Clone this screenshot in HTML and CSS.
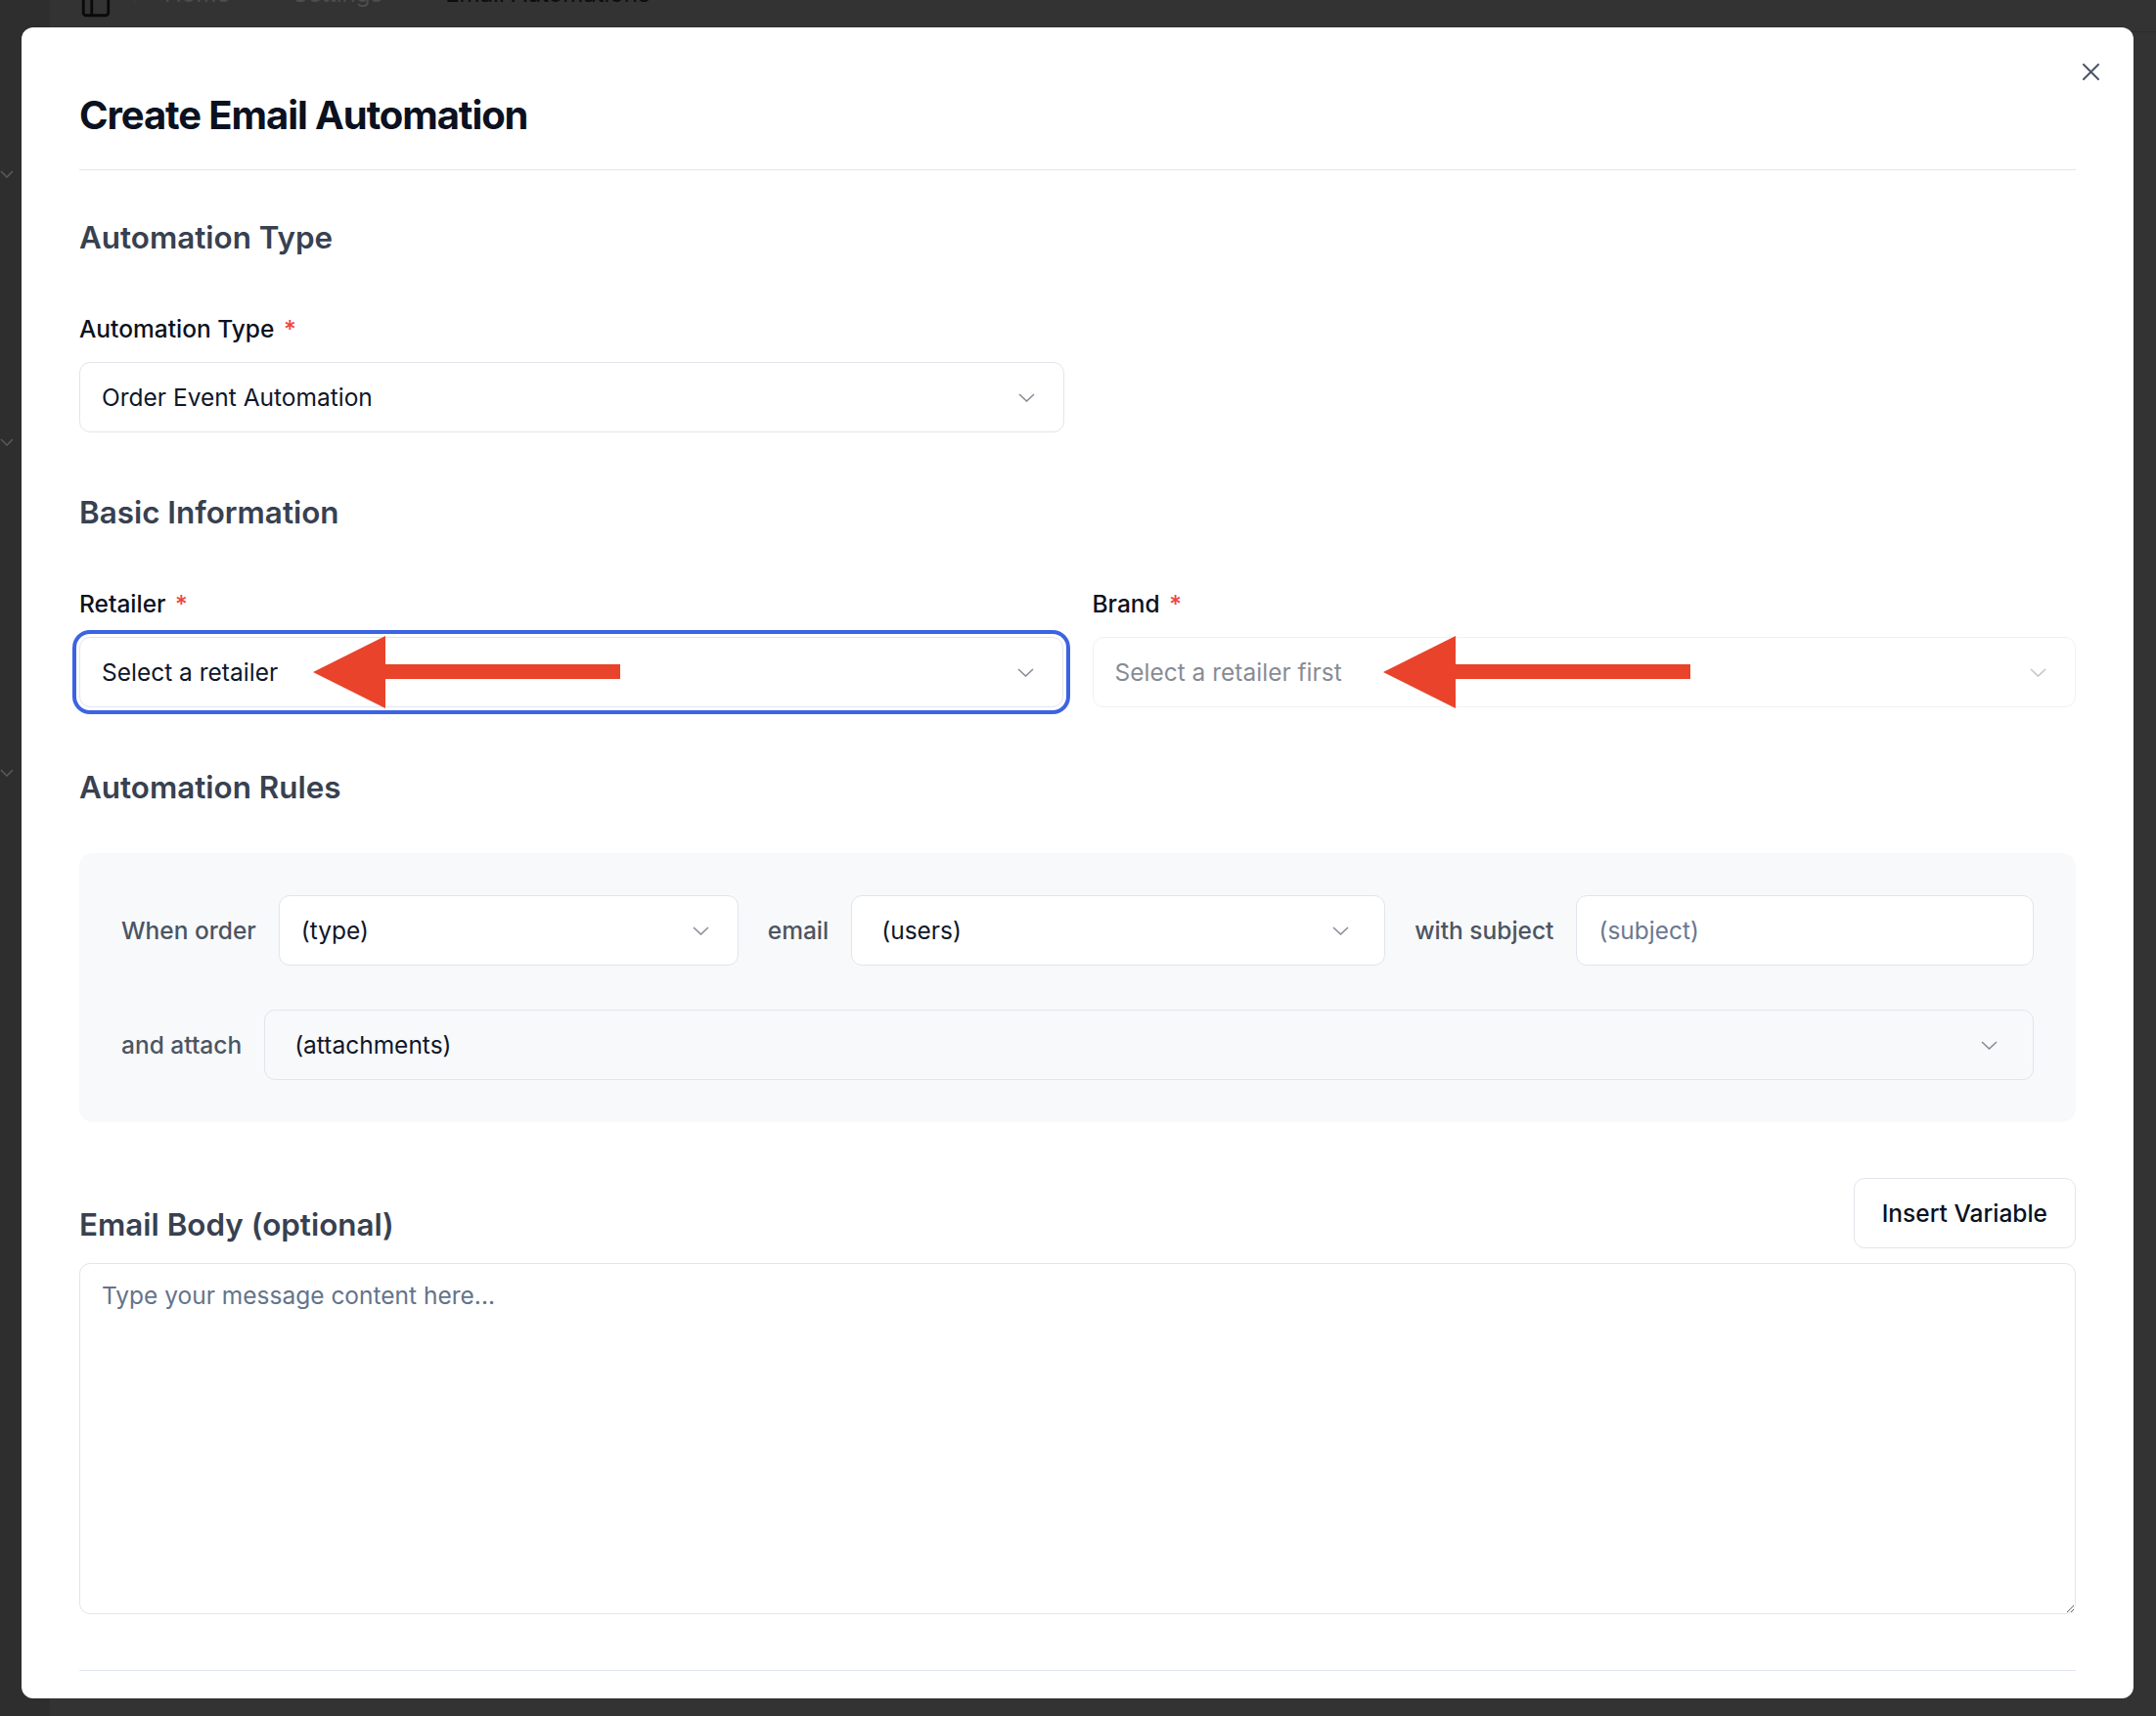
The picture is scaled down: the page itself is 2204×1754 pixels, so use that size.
FILE: index.html
```html
<!DOCTYPE html>
<html lang="en">
<head>
<meta charset="UTF-8">
<meta name="viewport" content="width=device-width, initial-scale=1.0">
<title>Create Email Automation</title>
<link rel="stylesheet" href="styles.css">
</head>
<body>

<!-- Page behind the dialog (dimmed) -->
<div class="app">
  <aside class="sidebar">
    <svg class="side-chev first" width="14" height="8" viewBox="0 0 14 8"><polyline points="1,1 7,7 13,1"/></svg>
    <svg class="side-chev second" width="14" height="8" viewBox="0 0 14 8"><polyline points="1,1 7,7 13,1"/></svg>
    <svg class="side-chev third" width="14" height="8" viewBox="0 0 14 8"><polyline points="1,1 7,7 13,1"/></svg>
  </aside>
  <div class="main">
    <header class="topbar">
      <svg class="panel-icon" width="34" height="34" viewBox="0 0 24 24"><rect x="3" y="3" width="18" height="18" rx="2"/><path d="M9 3v18"/></svg>
      <span class="topbar-sep"></span>
      <span class="crumb">Home</span>
      <span class="crumb">Settings</span>
      <span class="crumb current">Email Automations</span>
    </header>
  </div>
</div>

<!-- Dialog -->
<div class="modal">
  <button class="modal-close" type="button" aria-label="Close">
    <svg width="17" height="17" viewBox="0 0 17 17"><path d="M1 1 16 16M16 1 1 16"/></svg>
  </button>

  <div class="modal-header">
    <h1>Create Email Automation</h1>
  </div>

  <div class="modal-body">
    <section class="form-section">
      <h2>Automation Type</h2>
      <div class="field half">
        <label>Automation Type <span class="req">*</span></label>
        <button class="select" type="button">
          <span>Order Event Automation</span>
          <svg class="chev" width="17" height="9" viewBox="0 0 17 9"><polyline points="1,1 8.5,8 16,1"/></svg>
        </button>
      </div>
    </section>

    <section class="form-section">
      <h2>Basic Information</h2>
      <div class="two-col">
        <div class="field">
          <label>Retailer <span class="req">*</span></label>
          <div class="select-wrap">
            <button class="select focused" type="button">
              <span>Select a retailer</span>
              <svg class="chev" width="17" height="9" viewBox="0 0 17 9"><polyline points="1,1 8.5,8 16,1"/></svg>
            </button>
            <div class="arrow"></div>
          </div>
        </div>
        <div class="field">
          <label>Brand <span class="req">*</span></label>
          <div class="select-wrap">
            <button class="select disabled" type="button" disabled>
              <span>Select a retailer first</span>
              <svg class="chev" width="17" height="9" viewBox="0 0 17 9"><polyline points="1,1 8.5,8 16,1"/></svg>
            </button>
            <div class="arrow brand-arrow"></div>
          </div>
        </div>
      </div>
    </section>

    <section class="form-section rules-section">
      <h2>Automation Rules</h2>
      <div class="rules-box">
        <div class="rule-row">
          <span class="rule-text">When order</span>
          <button class="select rule-type" type="button">
            <span>(type)</span>
            <svg class="chev" width="17" height="9" viewBox="0 0 17 9"><polyline points="1,1 8.5,8 16,1"/></svg>
          </button>
          <span class="rule-text mid">email</span>
          <button class="select multi rule-users" type="button">
            <span>(users)</span>
            <svg class="chev" width="17" height="9" viewBox="0 0 17 9"><polyline points="1,1 8.5,8 16,1"/></svg>
          </button>
          <span class="rule-text mid">with subject</span>
          <input class="text-input rule-subject" type="text" placeholder="(subject)">
        </div>
        <div class="rule-row">
          <span class="rule-text">and attach</span>
          <button class="select multi rule-attach" type="button">
            <span>(attachments)</span>
            <svg class="chev" width="17" height="9" viewBox="0 0 17 9"><polyline points="1,1 8.5,8 16,1"/></svg>
          </button>
        </div>
      </div>
    </section>

    <section class="body-section">
      <div class="body-head">
        <h2>Email Body (optional)</h2>
        <button class="btn-outline" type="button">Insert Variable</button>
      </div>
      <textarea class="body-text" placeholder="Type your message content here..."></textarea>
    </section>

    <div class="modal-footer"></div>
  </div>
</div>

</body>
</html>
```

FILE: styles.css
```css
* {
  box-sizing: border-box;
}
body {
  margin: 0;
  width: 2204px;
  height: 1754px;
  overflow: hidden;
  background: #333333;
  font-family: Inter, "Noto Sans", sans-serif;
  color: #0f172a;
}

/* dimmed page behind the dialog */
.app {
  display: flex;
  height: 100%;
}
.sidebar {
  width: 51px;
  background: #2e2e2e;
  display: flex;
  flex-direction: column;
  padding-top: 174px;
}
.side-chev {
  fill: none;
  stroke: #5a5a5a;
  stroke-width: 1.5;
}
.side-chev.second {
  margin-top: 266px;
}
.side-chev.third {
  margin-top: 330px;
}
.main {
  flex: 1;
}
.topbar {
  height: 79px;
  border-bottom: 1px solid #2b2b2b;
  display: flex;
  align-items: center;
  padding-left: 30px;
  margin-top: -46px;
}
.panel-icon {
  fill: none;
  stroke: #0a0a0a;
  stroke-width: 2;
  margin-top: 20px;
  margin-right: 22px;
}
.topbar-sep {
  width: 1px;
  height: 24px;
  background: #3a3a3a;
  margin-right: 30px;
}
.crumb {
  font-size: 24px;
  color: #4d4d4d;
  margin-right: 64px;
}
.crumb.current {
  color: #0d0d0d;
}

/* dialog */
.modal {
  position: fixed;
  left: 22px;
  top: 28px;
  width: 2159px;
  height: 1708px;
  background: #fff;
  border-radius: 12px;
  overflow: hidden;
  padding: 0 59px;
}
.modal-close {
  position: absolute;
  top: 37px;
  right: 35px;
  padding: 0;
  border: none;
  background: none;
  line-height: 0;
}
.modal-close svg {
  stroke: #4b5563;
  stroke-width: 2;
  stroke-linecap: round;
}
.modal-header {
  padding: 66px 0 31px;
  border-bottom: 1px solid #e2e8f0;
}
.modal-header h1 {
  margin: 0;
  font-size: 40px;
  line-height: 48px;
  font-weight: 700;
  letter-spacing: -0.027em;
  color: #0b1120;
}
.modal-body {
  padding-top: 48px;
}
.form-section {
  margin-bottom: 61px;
}
.form-section.rules-section {
  margin-bottom: 57px;
}
.form-section h2,
.body-head h2 {
  margin: 0 0 47px;
  font-size: 31.4px;
  line-height: 42px;
  font-weight: 600;
  color: #374151;
}
.rules-section h2 {
  margin-bottom: 46px;
}
.two-col {
  display: grid;
  grid-template-columns: 1fr 1fr;
  gap: 30px;
}
.field {
  padding-top: 10px;
}
.field.half {
  width: 1007px;
}
.field label {
  display: block;
  margin: 0 0 19px;
  font-size: 24.5px;
  line-height: 30px;
  font-weight: 500;
  color: #0b1120;
}
.req {
  color: #ef4444;
  margin-left: 3px;
}
.select-wrap {
  position: relative;
}

/* select triggers */
.select {
  width: 100%;
  height: 72px;
  display: flex;
  align-items: center;
  justify-content: space-between;
  padding: 0 29px 0 22px;
  background: #fff;
  border: 1px solid #e2e5ec;
  border-radius: 11px;
  font-family: inherit;
  font-size: 24.5px;
  color: #0f172a;
  text-align: left;
}
.chev {
  fill: none;
  stroke: #6b7280;
  stroke-width: 1.6;
  opacity: 0.8;
}
.select.focused {
  box-shadow: 0 0 0 3px #fff, 0 0 0 7px #3b63e3;
}
.select.disabled {
  opacity: 0.5;
}
.select.multi {
  padding: 0 36px 0 30px;
}

/* annotation arrows drawn over the form */
.arrow {
  position: absolute;
  top: -1px;
  left: 239px;
  width: 314px;
  height: 74px;
}
.arrow.brand-arrow {
  left: 297px;
}
.arrow::before {
  content: "";
  position: absolute;
  left: 0;
  top: 0;
  width: 0;
  height: 0;
  border-top: 37px solid transparent;
  border-bottom: 37px solid transparent;
  border-right: 74px solid #e9432b;
}
.arrow::after {
  content: "";
  position: absolute;
  left: 73px;
  top: 29px;
  width: 241px;
  height: 15px;
  background: #e9432b;
}

/* rules */
.rules-box {
  background: #f8f9fb;
  border-radius: 14px;
  padding: 43px;
  display: flex;
  flex-direction: column;
  gap: 45px;
}
.rule-row {
  display: flex;
  align-items: center;
  gap: 23px;
}
.rule-text {
  font-size: 24.5px;
  font-weight: 500;
  color: #4b5563;
  white-space: nowrap;
}
.rule-text.mid {
  margin-left: 7px;
}
.rule-type {
  width: 470px;
  flex-shrink: 0;
}
.rule-users {
  width: 546px;
  flex-shrink: 0;
}
.rule-attach {
  flex: 1;
  width: auto;
  background: transparent;
}
.text-input {
  height: 72px;
  padding: 0 22px;
  background: #fff;
  border: 1px solid #e2e5ec;
  border-radius: 11px;
  font-family: inherit;
  font-size: 24.5px;
  color: #0f172a;
}
.text-input::placeholder {
  color: #6b7890;
}
.rule-subject {
  flex: 1;
  min-width: 0;
}

/* email body */
.body-head {
  display: flex;
  justify-content: space-between;
  align-items: flex-end;
}
.body-head h2 {
  margin: 0 0 3px;
}
.btn-outline {
  height: 72px;
  padding: 0 28px;
  background: #fff;
  border: 1px solid #e2e5ec;
  border-radius: 11px;
  font-family: inherit;
  font-size: 24.5px;
  font-weight: 500;
  color: #0b1120;
}
.body-text {
  display: block;
  width: 100%;
  height: 359px;
  margin-top: 15px;
  padding: 17px 22px;
  border: 1px solid #e2e5ec;
  border-radius: 11px;
  font-family: inherit;
  font-size: 24.5px;
  line-height: 30px;
  color: #0f172a;
  resize: vertical;
}
.body-text::placeholder {
  color: #64748b;
}
.modal-footer {
  margin-top: 57px;
  border-top: 1px solid #e2e8f0;
}
```
